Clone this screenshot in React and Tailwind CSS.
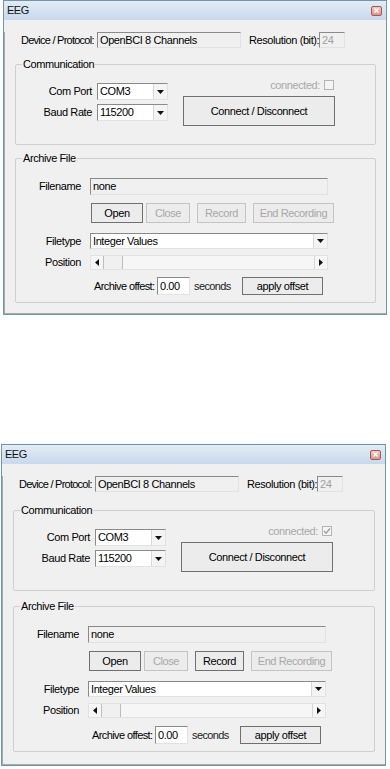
const Arrow = ({ dir = "down" }) => {
  const pts = {
    down: "0,0 7,0 3.5,4",
    left: "4,0 4,7 0,3.5",
    right: "0,0 0,7 4,3.5",
  }[dir];
  const size = dir === "down" ? "w-[7px] h-[4px]" : "w-[4px] h-[7px]";
  return (
    <svg className={size} viewBox={dir === "down" ? "0 0 7 4" : "0 0 4 7"}>
      <polygon points={pts} fill="#111" />
    </svg>
  );
};

const sunken = "border border-t-[#8a8a8a] border-l-[#8a8a8a] border-r-[#e2e2e2] border-b-[#e2e2e2]";

function Combo({ value, w, h = "h-[17px]" }) {
  return (
    <div className={`${w} ${h} ${sunken} bg-white flex items-center shrink-0`}>
      <span className="flex-1 pl-[2px] text-black truncate">{value}</span>
      <span className="w-[14px] h-full flex items-center justify-center bg-[#f4f4f4] border-l border-[#d8d8d8]">
        <Arrow />
      </span>
    </div>
  );
}

function Btn({ label, w, h = "h-[20px]", disabled }) {
  return (
    <div
      className={`${w} ${h} shrink-0 flex items-center justify-center border bg-[#ececec] ${
        disabled ? "border-[#c4c4c4] text-[#a8a8a8]" : "border-[#707070] text-black"
      }`}
    >
      {label}
    </div>
  );
}

function Group({ title, className, children }) {
  return (
    <fieldset className={`border border-[#cfcfcf] rounded-[2px] ${className}`}>
      <legend className="ml-[6px] px-[1px] leading-[14px] text-black">{title}</legend>
      {children}
    </fieldset>
  );
}

function Window({ checked, recordOn, tall, className }) {
  return (
    <div className={`border border-[#6e97a8] bg-[#f0f0f0] ${className}`}>
      {/* title bar */}
      <div className="h-[19px] flex items-center justify-between pl-[3px] pr-[4px] bg-gradient-to-b from-[#e3ecf7] to-[#c8d9ec]">
        <span className="text-[11px] text-[#111] tracking-[-0.5px]">EEG</span>
        <span className="w-[11px] h-[10px] rounded-[2px] border border-[#a8584f] bg-gradient-to-b from-[#f0c8c0] to-[#d89890] flex items-center justify-center">
          <svg className="w-[5px] h-[5px]" viewBox="0 0 5 5">
            <path d="M0.5 0.5 L4.5 4.5 M4.5 0.5 L0.5 4.5" stroke="#fff" strokeWidth="1.3" />
          </svg>
        </span>
      </div>

      <div className={`border-l border-b border-[#a9a9a9] px-[10px] ${tall ? "pb-[12px]" : "pb-[10px]"}`}>
        {/* device row */}
        <div className="mt-[12px] h-[16px] flex items-center pl-[6px]">
          <span className="w-[76px] whitespace-nowrap tracking-[-0.75px]">Device / Protocol:</span>
          <div className={`w-[144px] h-[16px] ${sunken} bg-[#f0f0f0] pl-[2px] flex items-center`}>OpenBCI 8 Channels</div>
          <span className="ml-[8px] w-[70px] whitespace-nowrap">Resolution (bit):</span>
          <div className={`w-[26px] h-[16px] ${sunken} bg-[#f0f0f0] pl-[2px] flex items-center text-[#a0a0a0]`}>24</div>
        </div>

        {/* communication */}
        <Group title="Communication" className={`${tall ? "mt-[11px]" : "mt-[9px]"} pb-[18px]`}>
          <div className="flex items-start">
            <div className="mt-[12px] flex flex-col gap-[4px]">
              <div className="flex items-center">
                <span className="w-[76px] text-right">Com Port</span>
                <span className="w-[5px]" />
                <Combo value="COM3" w="w-[71px]" />
              </div>
              <div className="flex items-center">
                <span className="w-[76px] text-right">Baud Rate</span>
                <span className="w-[5px]" />
                <Combo value="115200" w="w-[71px]" />
              </div>
            </div>
            <div className="ml-[15px] mt-[8px] w-[152px] flex flex-col">
              <div className="h-[12px] flex items-center justify-end gap-[4px] pr-[1px]">
                <span className="text-[#a8a8a8]">connected:</span>
                <span className="w-[10px] h-[10px] border border-[#b4b4b4] bg-[#f4f4f4] flex items-center justify-center">
                  {checked && (
                    <svg className="w-[8px] h-[8px]" viewBox="0 0 8 8">
                      <path d="M1 4 L3 6.2 L7 1.5" stroke="#a0a0a0" strokeWidth="1.4" fill="none" />
                    </svg>
                  )}
                </span>
              </div>
              <Btn label="Connect / Disconnect" w="w-[152px]" h="h-[30px] mt-[5px]" />
            </div>
          </div>
        </Group>

        {/* archive */}
        <Group title="Archive File" className={`${tall ? "mt-[8px]" : "mt-[6px]"} pb-[7px]`}>
          <div className="mt-[13px] flex items-center h-[17px]">
            <span className="w-[65px] text-right">Filename</span>
            <span className="w-[9px]" />
            <div className={`w-[238px] h-[17px] ${sunken} bg-[#f0f0f0] pl-[2px] flex items-center`}>none</div>
          </div>
          <div className="mt-[8px] ml-[75px] flex gap-[3px]">
            <Btn label="Open" w="w-[52px]" />
            <Btn label="Close" w="w-[44px]" disabled />
            <span className="w-[1px]" />
            <Btn label="Record" w="w-[49px]" disabled={!recordOn} />
            <span className="w-[1px]" />
            <Btn label="End Recording" w="w-[81px]" disabled />
          </div>
          <div className="mt-[10px] flex items-center">
            <span className="w-[65px] text-right">Filetype</span>
            <span className="w-[9px]" />
            <Combo value="Integer Values" w="w-[238px]" h="h-[16px]" />
          </div>
          <div className="mt-[6px] flex items-center">
            <span className="w-[65px] text-right">Position</span>
            <span className="w-[9px]" />
            <div className="w-[238px] h-[15px] flex bg-[#f6f6f6] border border-[#e2e2e2]">
              <span className="w-[13px] flex items-center justify-center border-r border-[#bdbdbd]">
                <Arrow dir="left" />
              </span>
              <span className="w-[19px] border-r border-[#bdbdbd] bg-[#f0f0f0]" />
              <span className="flex-1" />
              <span className="w-[13px] flex items-center justify-center border-l border-[#d6d6d6]">
                <Arrow dir="right" />
              </span>
            </div>
          </div>
          <div className={`${tall ? "mt-[8px]" : "mt-[7px]"} ml-[78px] flex items-center h-[18px]`}>
            <span className="w-[63px] whitespace-nowrap tracking-[-0.6px]">Archive offest:</span>
            <div className={`w-[33px] h-[18px] ${sunken} bg-white pl-[2px] flex items-center`}>0.00</div>
            <span className="ml-[4px] w-[40px] whitespace-nowrap tracking-[-0.6px] text-[#222]">seconds</span>
            <Btn label="apply offset" w="w-[81px] ml-[8px]" h="h-[18px]" />
          </div>
        </Group>
      </div>
    </div>
  );
}

export default function App() {
  return (
    <div className="w-[390px] min-h-[769px] bg-white text-[11px] leading-none tracking-[-0.4px] text-black [font-family:'Liberation_Sans',Arial,sans-serif]">
      <Window className="ml-[3px] w-[384px]" />
      <Window checked recordOn tall className="ml-[1px] mt-[129px] w-[385px]" />
    </div>
  );
}
